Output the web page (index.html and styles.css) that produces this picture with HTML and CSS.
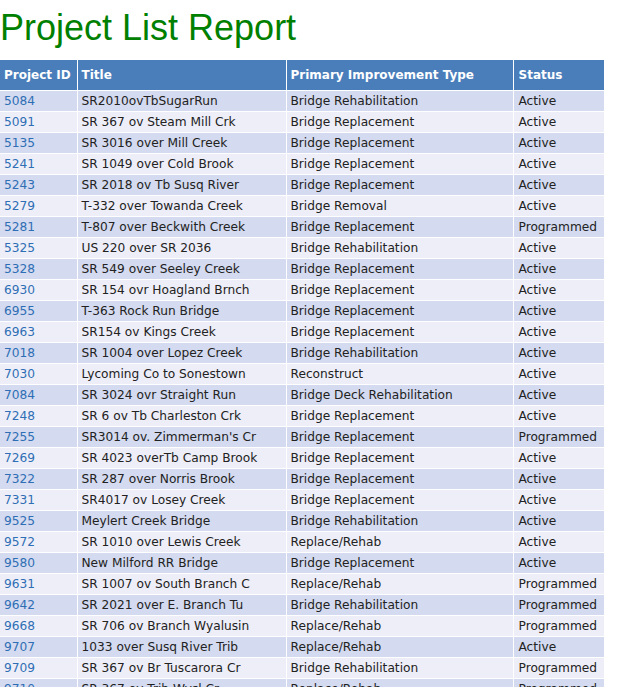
FILE: index.html
```html
<!DOCTYPE html>
<html>
<head>
<meta charset="utf-8">
<link rel="stylesheet" href="styles.css">
</head>
<body>
<h1 class="title">Project List Report</h1>
<table class="report">
<colgroup><col class="c-id"><col class="c-title"><col class="c-type"><col class="c-status"></colgroup>
<thead>
<tr><th>Project ID</th><th>Title</th><th>Primary Improvement Type</th><th>Status</th></tr>
</thead>
<tbody>
<tr><td><a href="#">5084</a></td><td>SR2010ovTbSugarRun</td><td>Bridge Rehabilitation</td><td>Active</td></tr>
<tr><td><a href="#">5091</a></td><td>SR 367 ov Steam Mill Crk</td><td>Bridge Replacement</td><td>Active</td></tr>
<tr><td><a href="#">5135</a></td><td>SR 3016 over Mill Creek</td><td>Bridge Replacement</td><td>Active</td></tr>
<tr><td><a href="#">5241</a></td><td>SR 1049 over Cold Brook</td><td>Bridge Replacement</td><td>Active</td></tr>
<tr><td><a href="#">5243</a></td><td>SR 2018 ov Tb Susq River</td><td>Bridge Replacement</td><td>Active</td></tr>
<tr><td><a href="#">5279</a></td><td>T-332 over Towanda Creek</td><td>Bridge Removal</td><td>Active</td></tr>
<tr><td><a href="#">5281</a></td><td>T-807 over Beckwith Creek</td><td>Bridge Replacement</td><td>Programmed</td></tr>
<tr><td><a href="#">5325</a></td><td>US 220 over SR 2036</td><td>Bridge Rehabilitation</td><td>Active</td></tr>
<tr><td><a href="#">5328</a></td><td>SR 549 over Seeley Creek</td><td>Bridge Replacement</td><td>Active</td></tr>
<tr><td><a href="#">6930</a></td><td>SR 154 ovr Hoagland Brnch</td><td>Bridge Replacement</td><td>Active</td></tr>
<tr><td><a href="#">6955</a></td><td>T-363 Rock Run Bridge</td><td>Bridge Replacement</td><td>Active</td></tr>
<tr><td><a href="#">6963</a></td><td>SR154 ov Kings Creek</td><td>Bridge Replacement</td><td>Active</td></tr>
<tr><td><a href="#">7018</a></td><td>SR 1004 over Lopez Creek</td><td>Bridge Rehabilitation</td><td>Active</td></tr>
<tr><td><a href="#">7030</a></td><td>Lycoming Co to Sonestown</td><td>Reconstruct</td><td>Active</td></tr>
<tr><td><a href="#">7084</a></td><td>SR 3024 ovr Straight Run</td><td>Bridge Deck Rehabilitation</td><td>Active</td></tr>
<tr><td><a href="#">7248</a></td><td>SR 6 ov Tb Charleston Crk</td><td>Bridge Replacement</td><td>Active</td></tr>
<tr><td><a href="#">7255</a></td><td>SR3014 ov. Zimmerman's Cr</td><td>Bridge Replacement</td><td>Programmed</td></tr>
<tr><td><a href="#">7269</a></td><td>SR 4023 overTb Camp Brook</td><td>Bridge Replacement</td><td>Active</td></tr>
<tr><td><a href="#">7322</a></td><td>SR 287 over Norris Brook</td><td>Bridge Replacement</td><td>Active</td></tr>
<tr><td><a href="#">7331</a></td><td>SR4017 ov Losey Creek</td><td>Bridge Replacement</td><td>Active</td></tr>
<tr><td><a href="#">9525</a></td><td>Meylert Creek Bridge</td><td>Bridge Rehabilitation</td><td>Active</td></tr>
<tr><td><a href="#">9572</a></td><td>SR 1010 over Lewis Creek</td><td>Replace/Rehab</td><td>Active</td></tr>
<tr><td><a href="#">9580</a></td><td>New Milford RR Bridge</td><td>Bridge Replacement</td><td>Active</td></tr>
<tr><td><a href="#">9631</a></td><td>SR 1007 ov South Branch C</td><td>Replace/Rehab</td><td>Programmed</td></tr>
<tr><td><a href="#">9642</a></td><td>SR 2021 over E. Branch Tu</td><td>Bridge Rehabilitation</td><td>Programmed</td></tr>
<tr><td><a href="#">9668</a></td><td>SR 706 ov Branch Wyalusin</td><td>Replace/Rehab</td><td>Programmed</td></tr>
<tr><td><a href="#">9707</a></td><td>1033 over Susq River Trib</td><td>Replace/Rehab</td><td>Active</td></tr>
<tr><td><a href="#">9709</a></td><td>SR 367 ov Br Tuscarora Cr</td><td>Bridge Rehabilitation</td><td>Programmed</td></tr>
<tr><td><a href="#">9710</a></td><td>SR 367 ov Trib Wysl Cr</td><td>Replace/Rehab</td><td>Programmed</td></tr>
</tbody>
</table>
</body>
</html>
```
FILE: styles.css
```css
html, body {
  margin: 0;
  padding: 0;
  background: #ffffff;
}

.title {
  margin: 7px 0 12px 0;
  font-family: "Liberation Sans", Arial, sans-serif;
  font-weight: normal;
  font-size: 36px;
  line-height: 41px;
  color: #008000;
}

.report {
  border-collapse: collapse;
  width: 604px;
  font-family: "DejaVu Sans", Verdana, sans-serif;
  font-size: 12.2px;
  table-layout: fixed;
}

.c-id { width: 77px; }
.c-title { width: 209px; }
.c-type { width: 227px; }
.c-status { width: 91px; }

.report th {
  background: #4a7ebb;
  color: #ffffff;
  font-weight: bold;
  font-size: 12px;
  text-align: left;
  height: 30px;
  padding: 0 4px;
  border: 1px solid #ffffff;
  border-top: none;
  white-space: nowrap;
}

.report td {
  height: 20px;
  padding: 0 4px;
  border: 1px solid #ffffff;
  color: #222222;
  white-space: nowrap;
  overflow: hidden;
}

.report th:first-child, .report td:first-child { border-left: none; }
.report th:last-child { padding-left: 5px; }
.report td:last-child { padding-left: 5px; }

.report tbody tr:nth-child(odd) td { background: #d4daef; }
.report tbody tr:nth-child(even) td { background: #eeeef8; }

.report a {
  color: #2e6eb5;
  text-decoration: none;
}
```
